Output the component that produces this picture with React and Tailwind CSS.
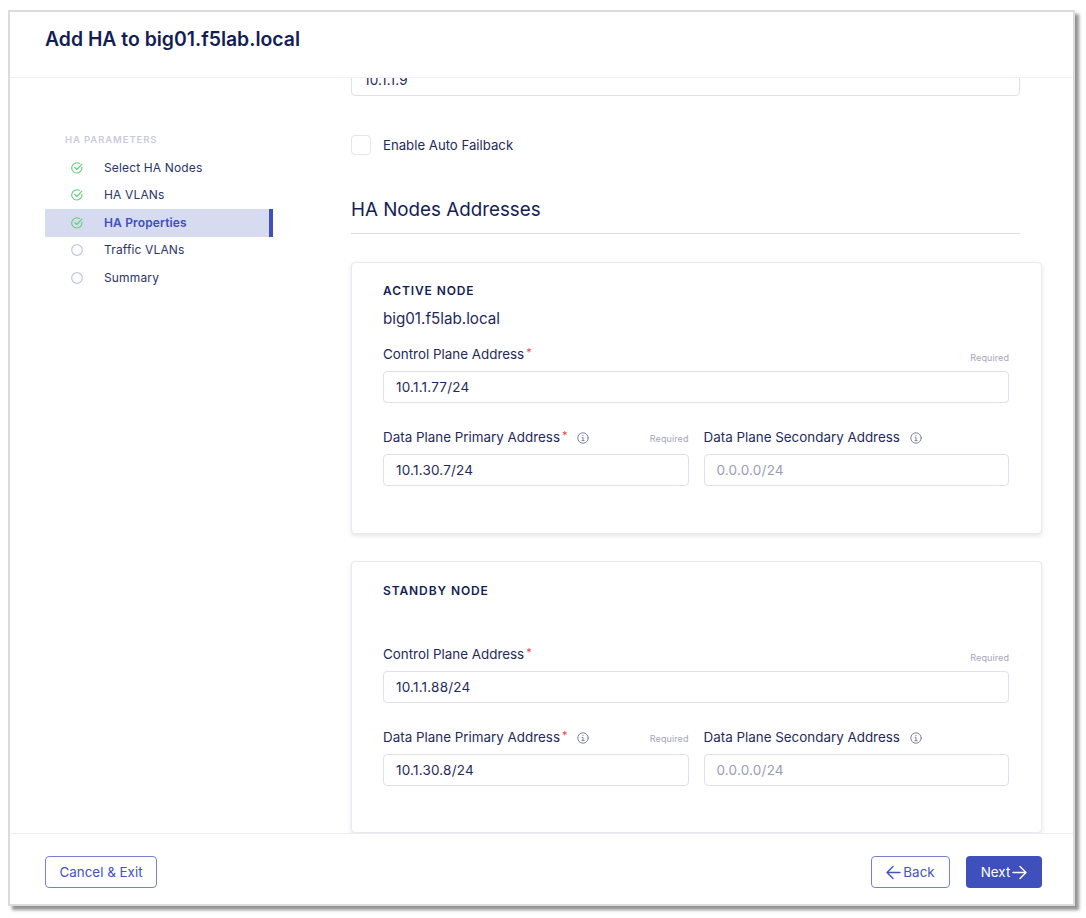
import React from "react";

const navItems = [
  { label: "Select HA Nodes", done: true },
  { label: "HA VLANs", done: true },
  { label: "HA Properties", done: true, active: true },
  { label: "Traffic VLANs" },
  { label: "Summary" },
];

const CheckIcon = () => (
  <svg width="12" height="12" viewBox="0 0 12 12" fill="none" stroke="#5fd07a" strokeWidth="1.1" strokeLinecap="round" strokeLinejoin="round">
    <path d="M10.9 5.3A5.1 5.1 0 1 1 8.4 1.5" />
    <path d="M3.7 5.4 5.8 7.5 10.9 2.2" />
  </svg>
);

const EmptyIcon = () => (
  <svg width="12" height="12" viewBox="0 0 12 12" fill="none" stroke="#c4c7dc" strokeWidth="1.2">
    <circle cx="6" cy="6" r="5.3" />
  </svg>
);

const InfoIcon = () => (
  <svg width="12" height="12" viewBox="0 0 12 12" fill="none" stroke="#7d82a0" strokeWidth="1" strokeLinecap="round">
    <circle cx="6" cy="6" r="5.2" />
    <path d="M5.1 5.4H6V8.6M5 8.6H7.1" />
    <circle cx="6" cy="3.4" r="0.6" fill="#7d82a0" stroke="none" />
  </svg>
);

const ArrowIcon = ({ flip }) => (
  <svg width="15" height="15" viewBox="0 0 15 15" fill="none" stroke="currentColor" strokeWidth="1.4" strokeLinecap="round" strokeLinejoin="round" className={flip ? "rotate-180" : ""}>
    <path d="M1 7.5H14M8 1.5 14 7.5 8 13.5" />
  </svg>
);

const Input = ({ value, placeholder }) => (
  <div className="h-8 w-full rounded-[4px] border border-[#dfe0ec] bg-white px-3 flex items-center text-[13.5px] tracking-[0.2px]">
    {value ? <span className="text-[#1f2a5c]">{value}</span> : <span className="text-[#9a9db5]">{placeholder}</span>}
  </div>
);

const FieldLabel = ({ children, required, info }) => (
  <div className="flex items-center">
    <span className="text-[13.4px] leading-4 text-[#1f2a5c]">{children}</span>
    {required && <span className="text-[11px] leading-3 text-[#e5484d] ml-0.5 -mt-1">*</span>}
    {info && (
      <span className="ml-[10px] mt-[2px]">
        <InfoIcon />
      </span>
    )}
  </div>
);

const NodeCard = ({ title, name, control, primary }) => (
  <section className={name
    ? "h-[272px] shrink-0 rounded-[4px] border border-[#e8e9f1] bg-white pl-[31px] pr-[32px] pt-[20px] shadow-[0_2px_4px_rgba(40,45,90,0.12)]"
    : "h-[272px] shrink-0 rounded-[4px] border border-[#e8e9f1] bg-white pl-[31px] pr-[32px] pt-[21px] shadow-[0_2px_4px_rgba(40,45,90,0.12)]"}>
    <h3 className="text-[12px] leading-4 font-semibold tracking-[0.9px] text-[#141e55]">{title}</h3>
    <p className="h-5 mt-[10px] text-[15.2px] leading-5 text-[#1f2a5c]">{name}</p>
    <div className="mt-[17px] flex items-start justify-between h-[25px]">
      <FieldLabel required>Control Plane Address</FieldLabel>
      <span className="text-[9px] text-[#a3a6bb] tracking-[0.1px] mt-[5px]">Required</span>
    </div>
    <Input value={control} />
    <div className="mt-[26px] grid grid-cols-2 gap-[15px]">
      <div>
        <div className="flex items-start justify-between h-[25px]">
          <FieldLabel required info>Data Plane Primary Address</FieldLabel>
          <span className="text-[9px] text-[#a3a6bb] tracking-[0.1px] mt-[3px]">Required</span>
        </div>
        <Input value={primary} />
      </div>
      <div>
        <div className="h-[25px]">
          <FieldLabel info>Data Plane Secondary Address</FieldLabel>
        </div>
        <Input placeholder="0.0.0.0/24" />
      </div>
    </div>
  </section>
);

export default function App() {
  return (
    <div className="h-[918px] w-[1086px] overflow-hidden bg-white pl-2 pt-[10px] font-['Inter',sans-serif]">
      <div className="flex h-[896px] w-[1067px] flex-col border-2 border-[#dcdcdc] bg-white shadow-[4px_4px_3px_rgba(90,90,90,0.65)]">
        <header className="h-[66px] shrink-0 border-b border-[#f0f1f6] pl-[35px] pt-[15px]">
          <h1 className="text-[19.4px] leading-6 font-semibold text-[#141e55]">Add HA to big01.f5lab.local</h1>
        </header>

        <div className="flex min-h-0 flex-1 overflow-hidden">
          <aside className="w-[341px] shrink-0 pl-[35px] pt-[56px]">
            <div className="pl-5 text-[9.5px] leading-3 font-semibold tracking-[0.9px] text-[#c9cbdc]">HA PARAMETERS</div>
            <ul className="mt-[8px] w-[228px]">
              {navItems.map((item) => (
                <li
                  key={item.label}
                  className={
                    item.active
                      ? "flex h-[27.5px] items-center border-r-[4px] border-[#3f4fbb] bg-[#d6dbf0] pl-[26px] text-[12px] font-semibold text-[#3f4fbb]"
                      : "flex h-[27.5px] items-center pl-[26px] text-[12px] text-[#2b3566]"
                  }
                >
                  {item.done ? <CheckIcon /> : <EmptyIcon />}
                  <span className="ml-[21px] tracking-[0.15px]">{item.label}</span>
                </li>
              ))}
            </ul>
          </aside>

          <main className="w-[691px] shrink-0 -mt-[14px]">
            <div className="w-[669px]">
              <Input value="10.1.1.9" />
              <label className="mt-[39px] flex h-5 items-center text-[13.2px] text-[#1f2a5c]">
                <span className="mr-[12px] h-5 w-5 rounded-[4px] border border-[#e3e4ee] bg-white" />
                <span className="mt-px">Enable Auto Failback</span>
              </label>
              <h2 className="mt-[41px] pb-[10px] border-b border-[#dcdde8] text-[18.8px] leading-[27px] text-[#141e55]">HA Nodes Addresses</h2>
            </div>
            <div className="mt-[28px] flex flex-col gap-[27px]">
              <NodeCard title="ACTIVE NODE" name="big01.f5lab.local" control="10.1.1.77/24" primary="10.1.30.7/24" />
              <NodeCard title="STANDBY NODE" control="10.1.1.88/24" primary="10.1.30.8/24" />
            </div>
          </main>
        </div>

        <footer className="flex h-[71px] shrink-0 items-start justify-between border-t border-[#ecedf3] pl-[35px] pr-[31px] pt-[22px]">
          <button className="h-8 w-[112px] rounded-[4px] border border-[#7482d6] text-[13.4px] text-[#4353bd]">Cancel &amp; Exit</button>
          <div className="flex gap-4">
            <button className="flex h-8 w-[79px] items-center justify-center gap-[2px] rounded-[4px] border border-[#7482d6] text-[13.4px] text-[#4353bd]">
              <ArrowIcon flip />
              Back
            </button>
            <button className="flex h-8 w-[76px] items-center justify-center gap-[2px] rounded-[4px] bg-[#3f4fbb] text-[13.4px] text-white">
              Next
              <ArrowIcon />
            </button>
          </div>
        </footer>
      </div>
    </div>
  );
}
